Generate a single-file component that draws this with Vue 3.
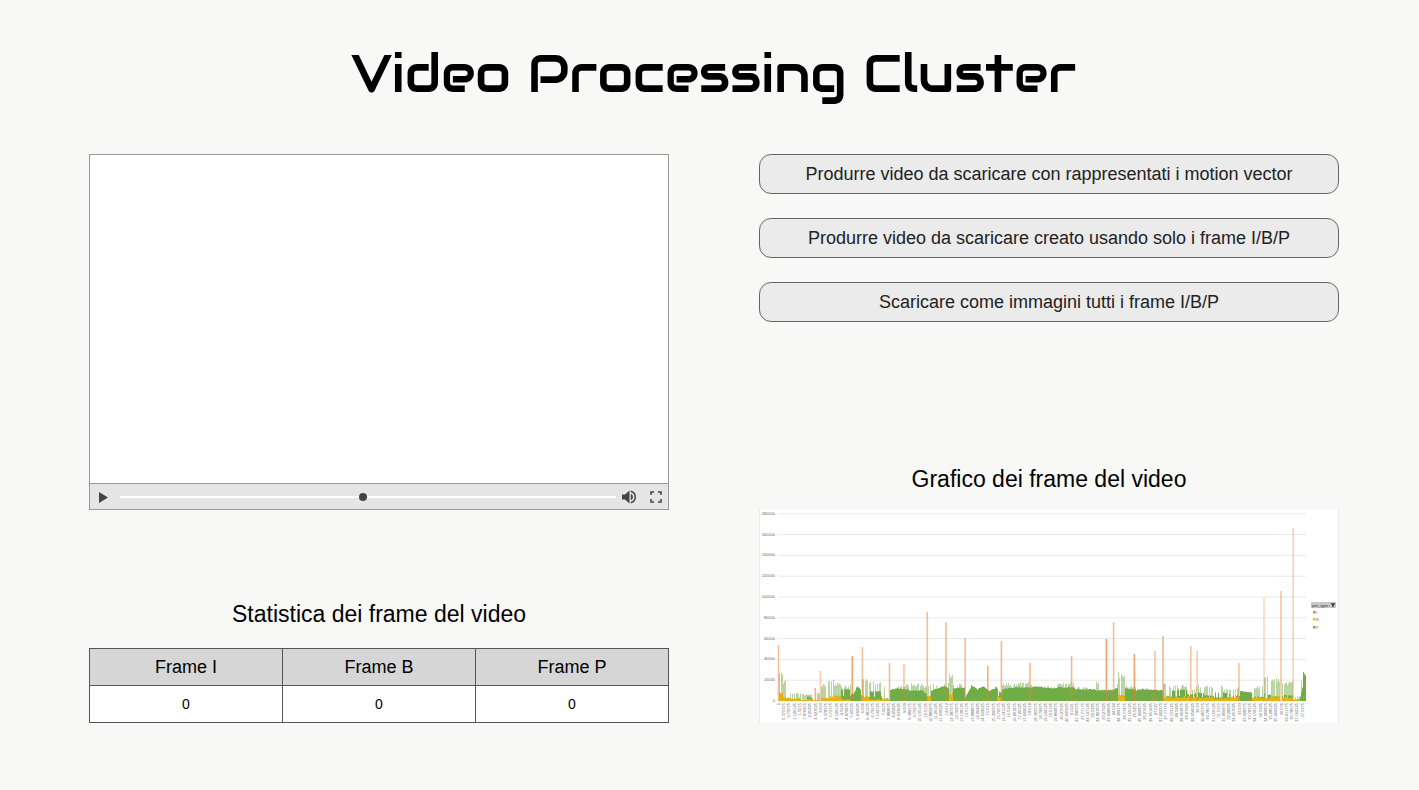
<script setup>
import { ref } from 'vue'

const position = ref(49)
const actions = [
  'Produrre video da scaricare con rappresentati i motion vector',
  'Produrre video da scaricare creato usando solo i frame I/B/P',
  'Scaricare come immagini tutti i frame I/B/P'
]
const stats = [
  { name: 'Frame I', count: 0 },
  { name: 'Frame B', count: 0 },
  { name: 'Frame P', count: 0 }
]

/* Chart geometry, in viewBox units */
const base = 192
const left = 19
const right = 547
const yTicks = Array.from({ length: 10 }, (_, i) => ({
  label: String(i * 20000),
  y: Math.round((base - i * 20.8) * 10) / 10
}))
const xTicks = Array.from({ length: 101 }, (_, i) => ({
  label: String(Math.round(i * 375375) / 1000000),
  x: 20 + i * 5.235
}))

/* Key frames: x, height, opacity */
const iFrames = [
  [19.5, 56, 0.5], [56.3, 13, 0.6], [61.5, 30, 0.4], [93.3, 45, 0.7], [103.3, 54, 0.45],
  [130.5, 38, 0.5], [145, 37, 0.45], [168.3, 89, 0.5], [187, 79, 0.5], [206.2, 63, 0.5],
  [228.8, 35, 0.6], [242.4, 60, 0.55], [271, 38, 0.55], [312.6, 45, 0.55], [347.4, 62, 0.7],
  [354.6, 79, 0.5], [375.4, 47, 0.7], [396, 50, 0.45], [404, 65, 0.55], [431.8, 55, 0.45],
  [438.2, 50, 0.4], [480, 38, 0.45], [505, 103, 0.3], [522, 110, 0.45], [534.2, 173, 0.35]
]

/* Ranges: from, to, dense P at start, dense P at end, pale P, B, share of pale bars */
const ranges = [
  [20, 24, 0, 0, 29, 9, 0.7], [24, 27, 0, 0, 21, 5, 0.7], [27, 31, 2, 2, 15, 4, 0.7],
  [31, 42, 0, 0, 9, 3, 0.6], [42, 48, 0, 0, 7, 1, 0.6], [48, 54, 4, 3, 7, 3, 0.5],
  [54, 61, 0, 0, 9, 1, 0.3], [62, 69, 0, 0, 17, 4, 0.8], [69, 75, 0, 0, 22, 5, 0.8],
  [75, 82, 0, 0, 19, 6, 0.8], [82, 92, 11, 11, 17, 2, 0.7], [92, 94, 7, 6, 0, 0, 0],
  [94, 98, 6, 15, 0, 0, 0], [98, 102, 14, 10, 0, 0, 0], [102, 110, 3, 3, 22, 6, 0.7],
  [110, 123, 9, 9, 20, 2, 0.5], [123, 130, 0, 0, 15, 3, 0.6],
  [131, 138, 11, 12, 13, 0, 0.3], [138, 150, 12, 11, 17, 0, 0.7],
  [150, 163, 10, 10, 18, 0, 0.9], [163, 168, 10, 6, 16, 0, 0.8],
  [168, 172, 0, 0, 18, 6, 0.8], [172, 186, 10, 15, 17, 0, 0.3], [186, 190, 14, 12, 20, 0, 0.5],
  [190, 194, 6, 8, 27, 9, 0.9], [194, 206, 12, 13, 19, 0, 0.5],
  [206, 212, 3, 14, 0, 0, 0], [212, 218, 15, 11, 0, 0, 0], [218, 224, 11, 14, 0, 0, 0],
  [224, 231, 14, 9, 15, 0, 0.2], [231, 238, 10, 14, 0, 0, 0], [238, 243, 12, 6, 0, 5, 0],
  [243, 250, 11, 13, 18, 0, 0.9], [250, 273, 13, 13, 19, 0, 0.9],
  [273, 298, 14, 12, 15, 0, 0.6], [298, 316, 13, 13, 19, 0, 0.9],
  [316, 337, 11, 11, 14, 0, 0.6], [337, 340, 10, 10, 20, 0, 0.9],
  [340, 356, 10, 11, 13, 0, 0.4], [356, 359, 12, 13, 18, 0, 0.6],
  [359, 366, 5, 5, 29, 7, 0.85], [366, 377, 12, 11, 16, 0, 0.7],
  [377, 384, 10, 12, 0, 0, 0], [384, 404, 11, 10, 13, 0, 0.4],
  [404, 410, 3, 5, 18, 5, 0.6], [410, 428, 10, 11, 16, 5, 0.7],
  [428, 436, 6, 6, 12, 5, 0.6], [436, 445, 8, 7, 16, 4, 0.4],
  [445, 455, 5, 5, 16, 5, 0.7], [455, 460, 8, 7, 0, 3, 0],
  [460, 464, 3, 3, 16, 4, 0.7], [464, 473, 8, 6, 13, 4, 0.6],
  [473, 481, 5, 5, 14, 5, 0.7], [481, 493, 9, 8, 11, 0, 0.3],
  [493, 505, 4, 4, 15, 4, 0.6], [505, 512, 7, 5, 27, 4, 0.7],
  [512, 521, 4, 4, 23, 5, 0.9], [523, 534, 5, 5, 20, 5, 0.7],
  [534, 541, 1, 1, 5, 1, 0.4], [541, 544, 4, 18, 20, 0, 0.3],
  [544, 547, 28, 23, 31, 0, 0.9]
]

let seed = 17
function noise() {
  seed = (seed * 16807) % 2147483647
  return seed / 2147483647
}
const bar = (x, h) => `M${x} ${base}v-${h.toFixed(1)}h1V${base}z`
let dense = ''
let pale = ''
let yellow = ''
for (const [from, to, start, end, light, b, share] of ranges) {
  for (let x = from; x < to; x++) {
    const level = start + ((end - start) * (x - from)) / (to - from)
    const drop = b > 0 && noise() < 0.35 ? 0.4 : 1
    if (level > 0) dense += bar(x, level * drop + noise())
    if (noise() < share) pale += bar(x, light * (0.8 + noise() * 0.2))
    if (b > 0) yellow += bar(x, b * (0.55 + noise() * 0.45))
  }
}
</script>

<template>
  <main class="page">
    <h1>Video Processing Cluster</h1>
    <div class="columns">
      <section class="column">
        <div class="player">
          <div class="screen"></div>
          <div class="controls">
            <button class="icon" type="button" aria-label="Play">
              <svg width="14" height="14" viewBox="0 0 14 14"><path d="M3 2v11l9-5.5z" /></svg>
            </button>
            <input v-model="position" class="seek" type="range" min="0" max="100" aria-label="Posizione" />
            <button class="icon" type="button" aria-label="Volume">
              <svg width="16" height="16" viewBox="0 0 16 16">
                <path d="M1 5.500h3L8.500 1.500v13L4 10.500H1z" />
                <path d="M9.800 4.700a3.600 3.600 0 0 1 0 6.600z" />
                <path class="line thin" d="M9.800 2.200a6 6 0 0 1 0 11.600" />
              </svg>
            </button>
            <button class="icon" type="button" aria-label="Schermo intero">
              <svg width="12" height="12" viewBox="0 0 12 12">
                <path class="line thin" d="M1 4V1h3M8 1h3v3M11 8v3H8M4 11H1V8" />
              </svg>
            </button>
          </div>
        </div>
        <div class="block">
          <h2 class="stats-title">Statistica dei frame del video</h2>
          <table>
            <thead>
              <tr><th v-for="s in stats" :key="s.name" scope="col">{{ s.name }}</th></tr>
            </thead>
            <tbody>
              <tr><td v-for="s in stats" :key="s.name">{{ s.count }}</td></tr>
            </tbody>
          </table>
        </div>
      </section>

      <section class="column">
        <div class="actions">
          <button v-for="a in actions" :key="a" class="action" type="button">{{ a }}</button>
        </div>
        <div class="block">
          <h2>Grafico dei frame del video</h2>
          <svg class="chart" viewBox="0 0 580 214" role="img" aria-label="Grafico dei frame del video">
            <rect width="580" height="214" fill="#fff" />
            <path d="M.5 0v214M579.500 0v214" stroke="#ececec" />
            <g v-for="t in yTicks" :key="t.label">
              <line :x1="left" :x2="right" :y1="t.y" :y2="t.y" stroke="#e9e9e9" />
              <text class="tick" x="16" :y="t.y + 1" text-anchor="end">{{ t.label }}</text>
            </g>
            <path :d="pale" fill="#70ad47" fill-opacity=".5" />
            <path :d="dense" fill="#70ad47" />
            <path :d="yellow" fill="#dfb414" />
            <rect
              v-for="[x, h, o] in iFrames" :key="x" :x="x - 0.8" :y="base - h" width="1.600" :height="h"
              fill="#ed7d31" :fill-opacity="o"
            />
            <text
              v-for="t in xTicks" :key="t.label" class="tick" text-anchor="end"
              :transform="`translate(${t.x + 1} 194) rotate(-90)`"
            >{{ t.label }}</text>
            <rect x="552" y="93" width="25" height="6" fill="#c8c8c8" />
            <text class="legend head" x="553" y="97.500">pict_type</text>
            <path d="M570 97h1M572 94.500h4l-1.500 2v1.500h-1v-1.500z" fill="#333" stroke="#333" stroke-width=".4" />
            <rect x="554" y="102" width="2.500" height="2.500" fill="#ed7d31" />
            <rect x="554" y="109" width="2.500" height="2.500" fill="#ffc000" />
            <rect x="554" y="117" width="2.500" height="2.500" fill="#70ad47" />
            <text class="legend" x="557" y="105">I</text>
            <text class="legend" x="557" y="112">B</text>
            <text class="legend" x="557" y="120">P</text>
          </svg>
        </div>
      </section>
    </div>
  </main>
</template>

<style>
body {
  margin: 0;
  background: #f8f8f6;
}
</style>

<style scoped>
.page {
  padding: 40px 80px 48px 89px;
  font-family: "Liberation Sans", Arial, sans-serif;
  color: #000;
}
h1 {
  margin: 0 0 46px;
  font: 400 52px/68px Audiowide, Orbitron, "DejaVu Sans", sans-serif;
  text-align: center;
}
.columns {
  display: grid;
  grid-template-columns: minmax(0, 1fr) minmax(0, 1fr);
  gap: 90px;
}
.column {
  display: flex;
  flex-direction: column;
  justify-content: space-between;
  min-height: 569px;
}
.player {
  border: 1px solid #999;
}
.screen {
  aspect-ratio: 578 / 328;
  background: #fff;
}
.controls {
  display: flex;
  align-items: center;
  height: 25px;
  padding: 0 6px;
  border-top: 1px solid #999;
  background: #e5e5e5;
}
.icon {
  display: flex;
  padding: 0;
  border: 0;
  background: none;
}
.icon svg {
  fill: #444;
}
.icon .line {
  fill: none;
  stroke: #444;
  stroke-width: 2;
}
.icon .thin {
  stroke-width: 1.500;
}
.icon:last-child {
  margin-left: 13px;
}
.seek {
  flex: 1;
  min-width: 0;
  height: 10px;
  margin: 0 5px 0 10px;
  appearance: none;
  background: linear-gradient(#fff, #fff) center / 100% 2px no-repeat;
}
.seek::-webkit-slider-thumb {
  appearance: none;
  width: 8px;
  height: 8px;
  border-radius: 50%;
  background: #444;
}
h2 {
  margin: 0 0 16px;
  font-size: 23px;
  font-weight: 400;
  line-height: 28px;
  text-align: center;
}
.stats-title {
  margin-bottom: 20px;
}
table {
  width: 100%;
  border-collapse: collapse;
  table-layout: fixed;
}
th,
td {
  height: 36px;
  padding: 0;
  border: 1px solid #555;
  background: #fff;
  text-align: center;
  font-size: 14px;
  font-weight: 400;
}
th {
  background: #d6d6d6;
  font-size: 18px;
}
.actions {
  display: flex;
  flex-direction: column;
  gap: 24px;
}
.action {
  height: 40px;
  padding: 0 12px;
  border: 1px solid #666;
  border-radius: 12px;
  background: #ebebeb;
  color: #222;
  font: 18px "Liberation Sans", Arial, sans-serif;
}
.chart {
  display: block;
  width: 100%;
}
.tick {
  font-size: 4px;
  fill: #666;
}
.legend {
  font-size: 4px;
  fill: #777;
}
.head {
  fill: #333;
}
</style>
